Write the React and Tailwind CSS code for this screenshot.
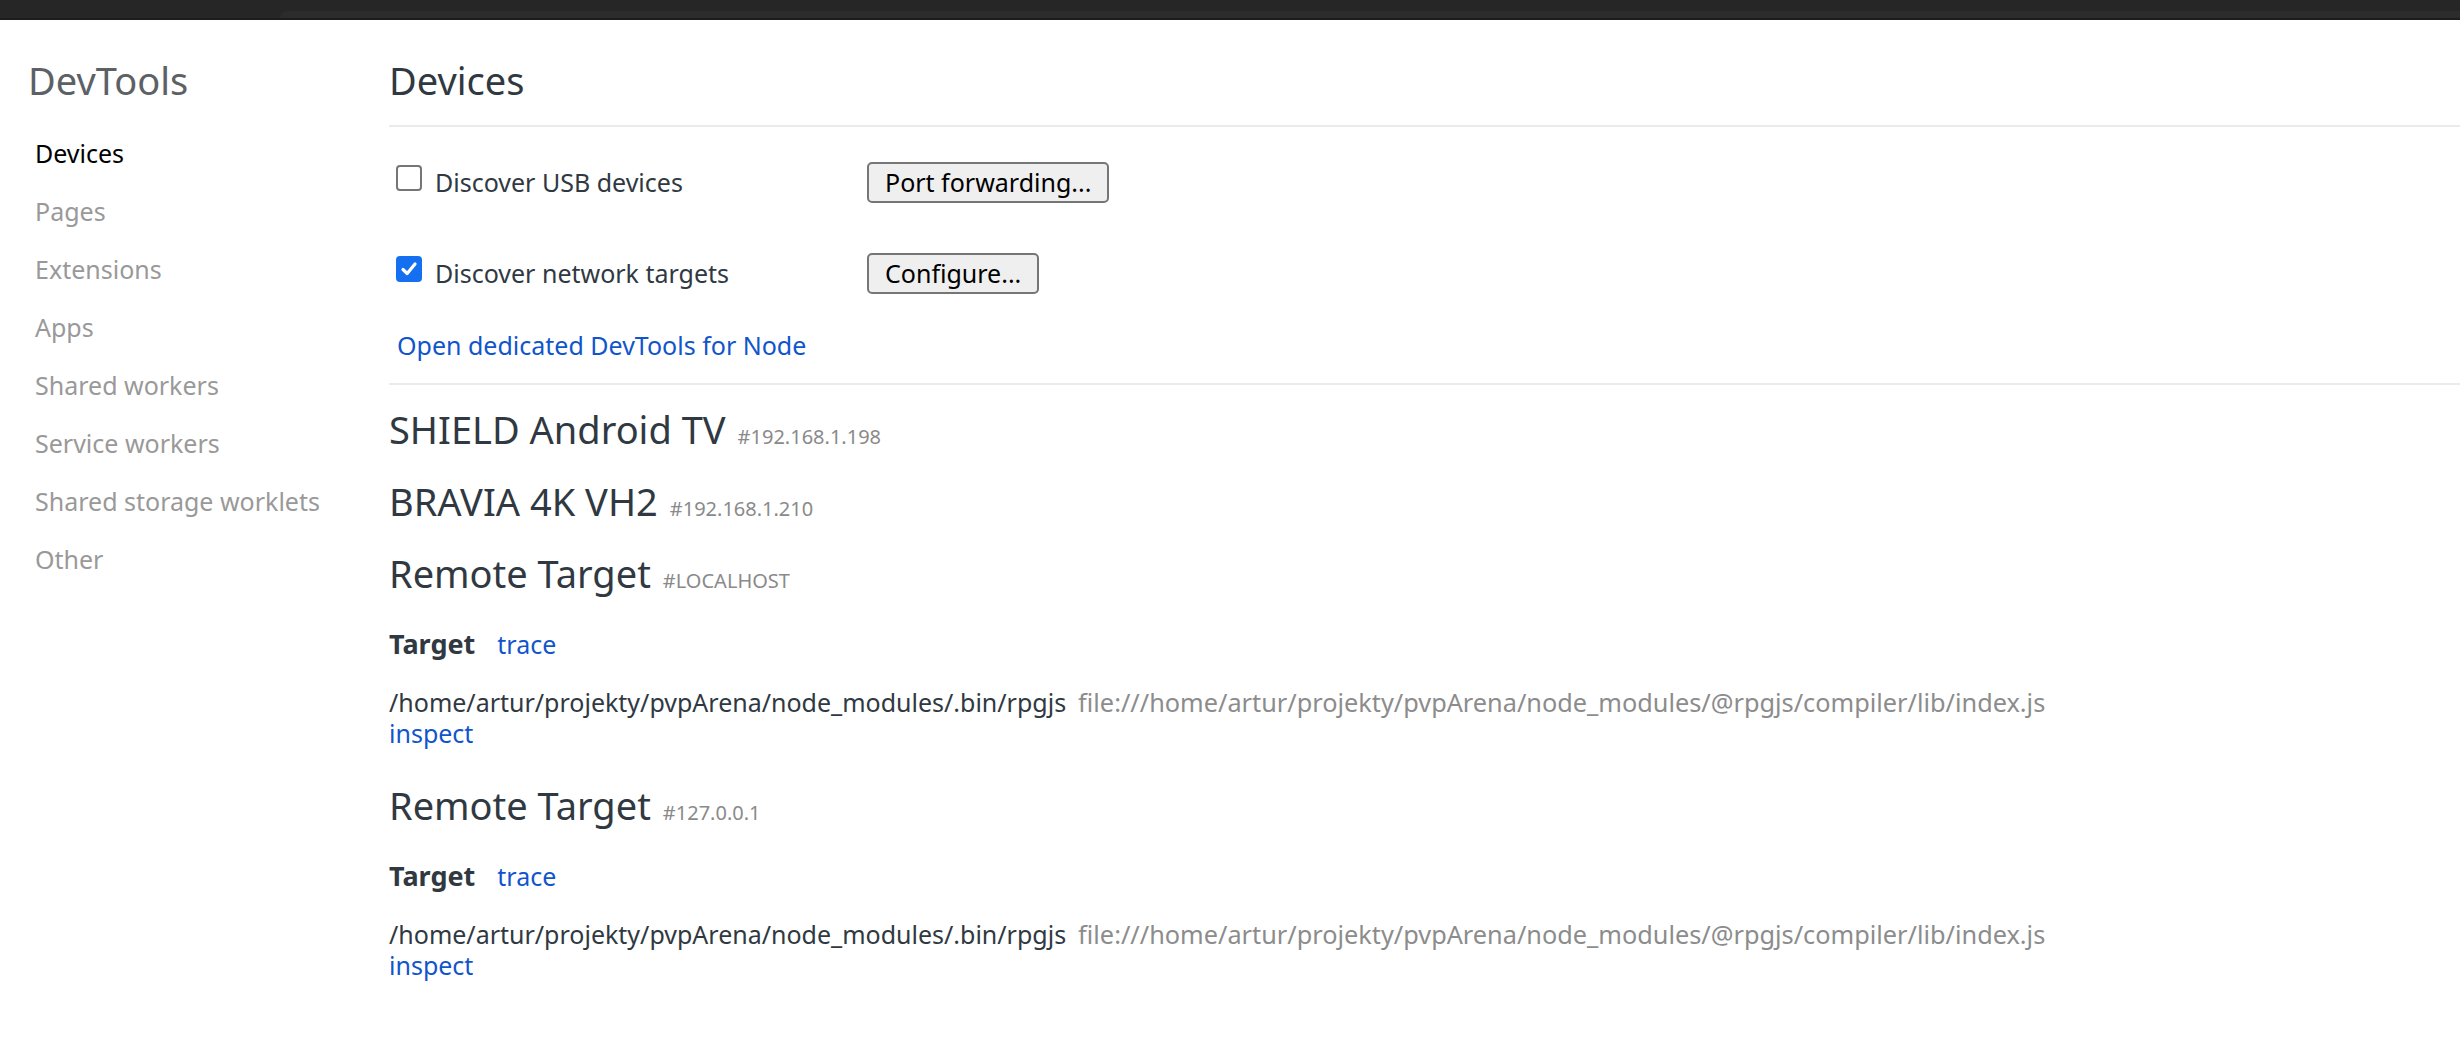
import React from 'react';

const navItems = [
  'Devices',
  'Pages',
  'Extensions',
  'Apps',
  'Shared workers',
  'Service workers',
  'Shared storage worklets',
  'Other',
];

const devices = [
  { name: 'SHIELD Android TV', id: '#192.168.1.198' },
  { name: 'BRAVIA 4K VH2', id: '#192.168.1.210' },
];

const remotes = ['#LOCALHOST', '#127.0.0.1'];

const PATH = '/home/artur/projekty/pvpArena/node_modules/.bin/rpgjs';
const URL = 'file:///home/artur/projekty/pvpArena/node_modules/@rpgjs/compiler/lib/index.js';

const Checkbox = ({ checked }) => {
  if (checked) {
    return (
      <span className="mt-[3px] ml-[7px] w-[26px] h-[26px] shrink-0 rounded-[4px] bg-[#1470f0] flex items-center justify-center">
        <svg width="20" height="20" viewBox="0 0 20 20" fill="none">
          <path d="M4 10.5 L8.2 14.5 L16 5" stroke="white" strokeWidth="3.2" strokeLinecap="round" strokeLinejoin="round" />
        </svg>
      </span>
    );
  }
  return <span className="mt-[3px] ml-[7px] w-[26px] h-[26px] shrink-0 rounded-[4px] border-2 border-[#767676] bg-white" />;
};

const OptionRow = ({ checked, label, button, className }) => (
  <div className={`flex items-start ${className}`}>
    <div className="w-[478px] shrink-0 flex items-start">
      <Checkbox checked={checked} />
      <span className="ml-[13px] text-[25px] leading-[41px] text-[#303942]">{label}</span>
    </div>
    <button className="h-[41px] px-[16px] border-2 border-[#767676] rounded-[5px] bg-[#efefef] text-[25px] leading-none text-black">
      {button}
    </button>
  </div>
);

const Title = ({ name, id, className = '' }) => (
  <div className={`flex items-baseline ${className}`}>
    <span className="text-[38px] leading-[48px] text-[#303942]">{name}</span>
    <span className="ml-[12px] text-[20px] leading-[20px] text-[#8a8a8a]">{id}</span>
  </div>
);

const RemoteTarget = ({ id, className }) => (
  <div className={className}>
    <Title name="Remote Target" id={id} />
    <div className="mt-[32px] flex items-baseline text-[25px] leading-[30px]">
      <span className="text-[27px] leading-[30px] font-bold text-[#303942]">Target</span>
      <span className="ml-[22px] text-[#1155cc]">trace</span>
    </div>
    <div className="mt-[28px] text-[25px] leading-[31px]">
      <div className="whitespace-nowrap">
        <span className="text-[#303942]">{PATH}</span>
        <span className="ml-[12px] text-[25.3px] text-[#8c8c8c]">{URL}</span>
      </div>
      <div className="text-[#1155cc]">inspect</div>
    </div>
  </div>
);

export default function App() {
  return (
    <div className="min-h-screen bg-white font-['Noto_Sans',sans-serif]">
      {/* window top strip */}
      <div className="h-[20px] bg-[#1c1c1c] flex flex-col">
        <div className="h-[11px] bg-[#262626]" />
        <div className="h-[7px] flex bg-[#262626]">
          <div className="w-[280px]" />
          <div className="flex-1 bg-[#2c2c2c] rounded-tl-[10px]" />
        </div>
      </div>

      <div className="flex">
        <aside className="w-[389px] shrink-0">
          <h1 className="mt-[36px] pl-[28px] text-[38px] leading-[48px] text-[#5c6166]">DevTools</h1>
          <nav className="mt-[20px] pl-[35px]">
            {navItems.map((item, i) => (
              <div
                key={item}
                className={`text-[25px] leading-[58px] ${i === 0 ? 'text-black' : 'text-[#999999]'}`}
              >
                {item}
              </div>
            ))}
          </nav>
        </aside>

        <main className="flex-1 min-w-0 pb-[40px]">
          <h1 className="mt-[36px] text-[38px] leading-[48px] text-[#303942]">Devices</h1>
          <div className="mt-[21px] h-[2px] bg-[#ebebeb]" />

          <OptionRow className="mt-[35px]" label="Discover USB devices" button="Port forwarding..." />
          <OptionRow className="mt-[50px]" checked label="Discover network targets" button="Configure..." />

          <div className="mt-[36px] ml-[8px] text-[25px] leading-[30px] text-[#1155cc]">
            Open dedicated DevTools for Node
          </div>
          <div className="mt-[23px] h-[2px] bg-[#ebebeb]" />

          <div className="mt-[20px]">
            {devices.map((d, i) => (
              <Title key={d.id} name={d.name} id={d.id} className={i > 0 ? 'mt-[24px]' : ''} />
            ))}
            <RemoteTarget id={remotes[0]} className="mt-[24px]" />
            <RemoteTarget id={remotes[1]} className="mt-[32px]" />
          </div>
        </main>
      </div>
    </div>
  );
}
